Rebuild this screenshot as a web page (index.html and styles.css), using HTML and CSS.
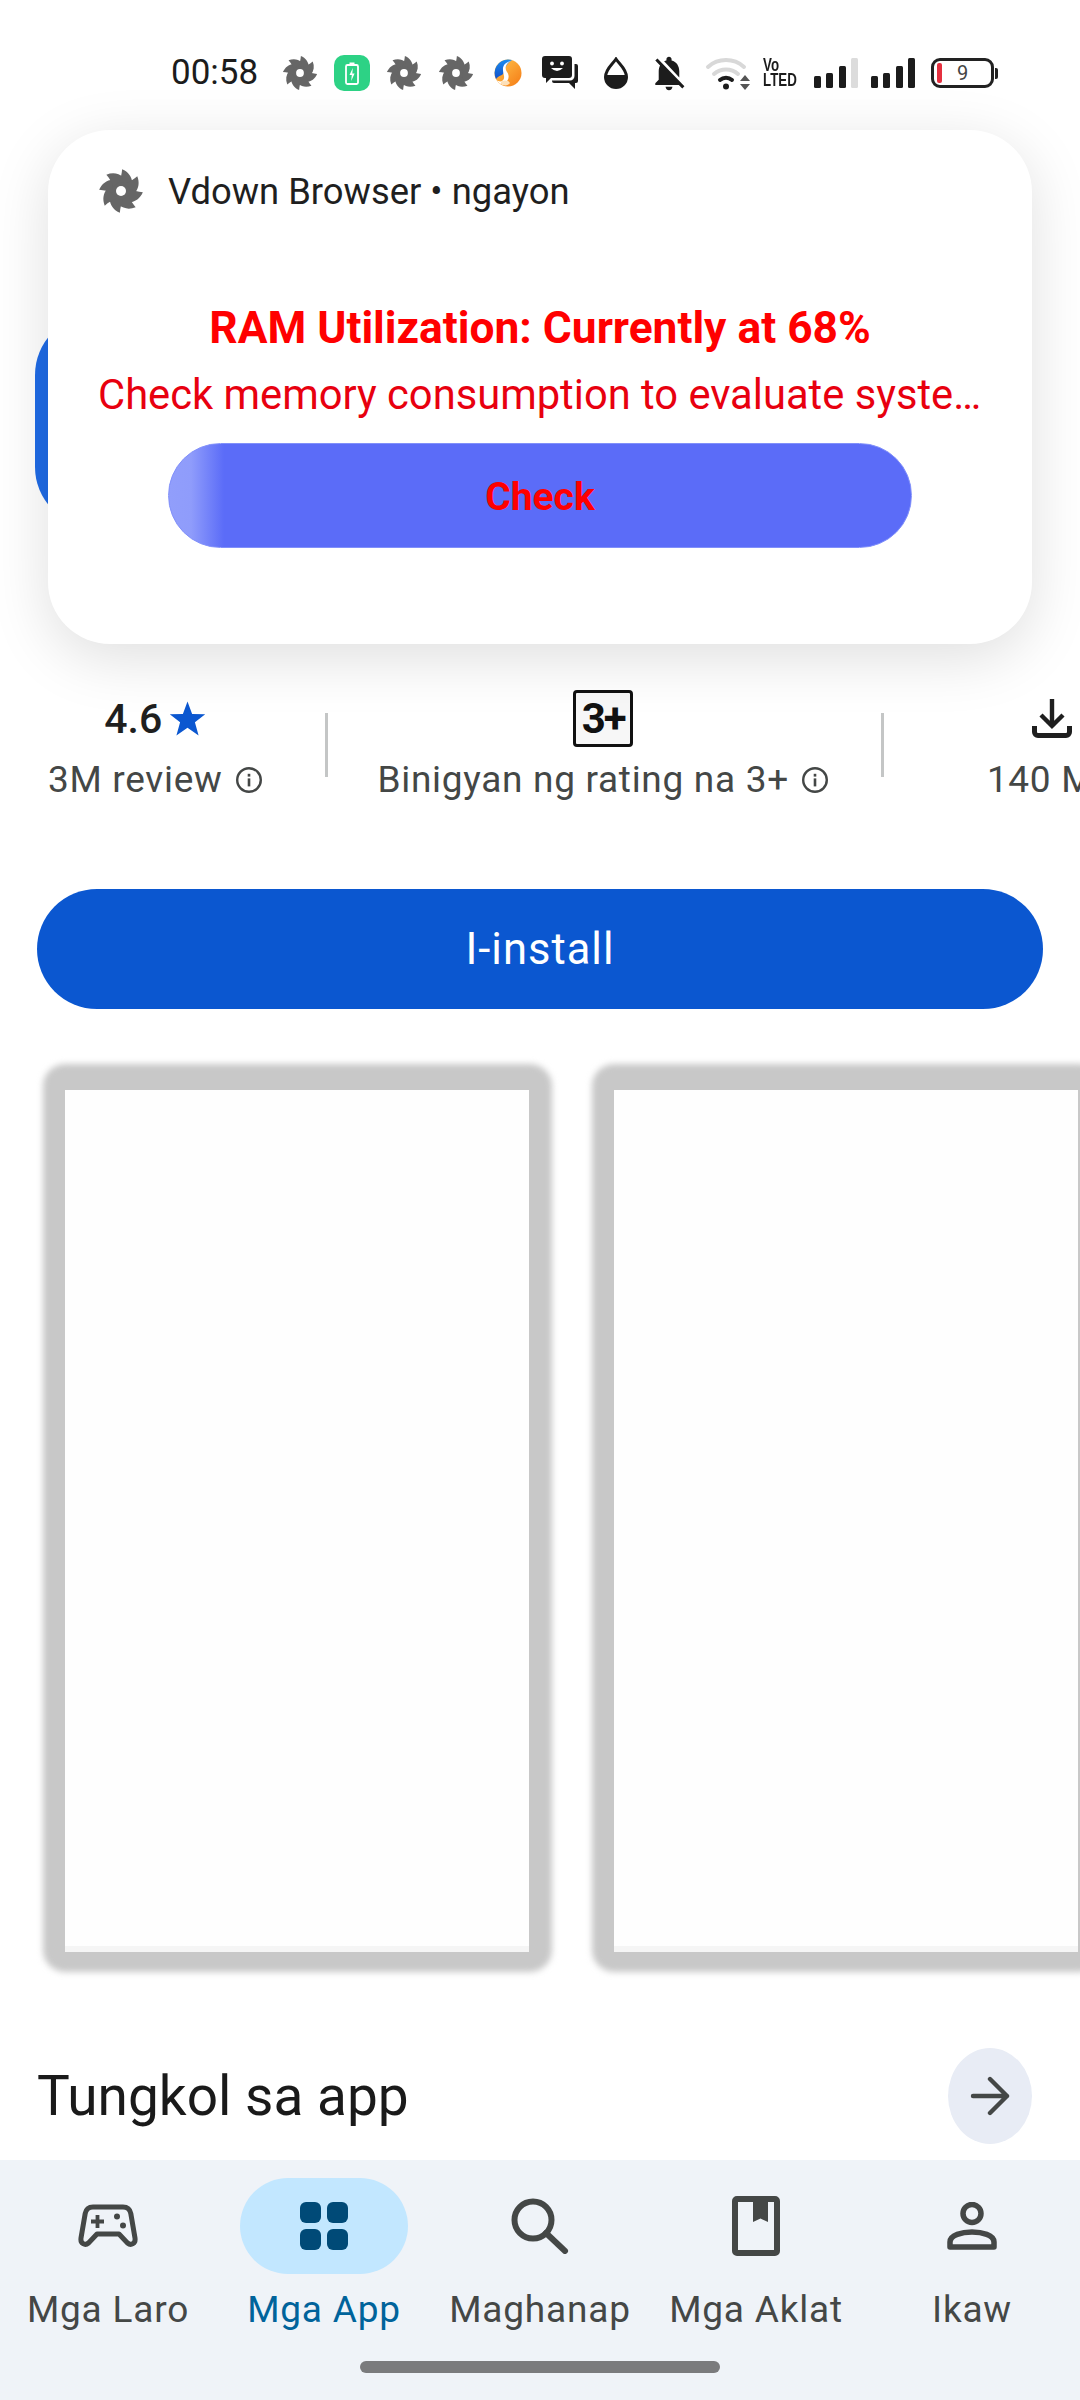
FILE: index.html
```html
<!DOCTYPE html>
<html lang="tl">
<head>
<meta charset="utf-8">
<title>Vdown Browser</title>
<link rel="stylesheet" href="styles.css">
</head>
<body>
<svg class="defs" width="0" height="0" aria-hidden="true">
  <defs>
    <g id="blade"><path d="M12.6 .6 C15.8 2 17.6 4.4 18 7.8 L11 7.6 C11.8 5.4 12.4 3.200 12.6 .6 Z"/></g>
    <symbol id="saw" viewBox="0 0 24 24">
      <circle cx="12" cy="12" r="7.8"/>
      <use href="#blade"/>
      <use href="#blade" transform="rotate(45 12 12)"/>
      <use href="#blade" transform="rotate(90 12 12)"/>
      <use href="#blade" transform="rotate(135 12 12)"/>
      <use href="#blade" transform="rotate(180 12 12)"/>
      <use href="#blade" transform="rotate(225 12 12)"/>
      <use href="#blade" transform="rotate(270 12 12)"/>
      <use href="#blade" transform="rotate(315 12 12)"/>
      <circle cx="12" cy="12" r="2.6" fill="#fff"/>
    </symbol>
    <symbol id="info" viewBox="0 0 28 28">
      <circle cx="14" cy="14" r="11.8" fill="none" stroke="currentColor" stroke-width="2.4"/>
      <rect x="12.7" y="12.4" width="2.6" height="8" fill="currentColor"/>
      <rect x="12.7" y="7.8" width="2.6" height="2.8" fill="currentColor"/>
    </symbol>
    <linearGradient id="orbR" x1="0" y1="0" x2="1" y2="1"><stop offset="0" stop-color="#ffc850"/><stop offset="1" stop-color="#f57a14"/></linearGradient>
    <linearGradient id="orbL" x1="0" y1="0" x2="0" y2="1"><stop offset="0" stop-color="#1a8cf0"/><stop offset="1" stop-color="#1450c8"/></linearGradient>
  </defs>
</svg>

<div class="page">
  <header class="status">
    <span class="time">00:58</span>
    <svg class="si saw s1"><use href="#saw"/></svg>
    <svg class="si batt-app" viewBox="0 0 36 36">
      <rect width="36" height="36" rx="10" fill="#2dd285"/>
      <rect x="12" y="10" width="12" height="19" rx="1.5" fill="none" stroke="#fff" stroke-width="1.8"/>
      <rect x="15.5" y="7.5" width="5" height="2.5" fill="#fff"/>
      <path d="M18.8 13 L15.5 20 H17.8 L17.2 26 L20.6 18.6 H18.3 Z" fill="#fff"/>
    </svg>
    <svg class="si saw s2"><use href="#saw"/></svg>
    <svg class="si saw s3"><use href="#saw"/></svg>
    <svg class="si orb" viewBox="0 0 28 28">
      <circle cx="14" cy="14" r="13.5" fill="url(#orbR)"/>
      <path d="M14 .5 A13.5 13.5 0 0 0 2 20 C5 16 9 17 10 13 C11 9 12 5 18 1 Z" fill="url(#orbL)"/>
      <path d="M18 1.2 C12 4 10 9 13 13 C16 17 15 22 9 26 C6 25 4 23 2.6 21 C6 24 11 22 10 17 C9 12 7 6 14 3 Z" fill="#fff"/>
      <path d="M7 23 C10 21 14 21 16 24 C14 27 10 27 7 25 Z" fill="#fde0b8"/>
    </svg>
    <svg class="si chat" viewBox="0 0 36 34">
      <path d="M3 0 H27 A3 3 0 0 1 30 3 V19 A3 3 0 0 1 27 22 H9 L4 27 V22 H3 A3 3 0 0 1 0 19 V3 A3 3 0 0 1 3 0 Z" fill="#1c1c1c"/>
      <path d="M32.5 8 H34 A2 2 0 0 1 36 10 V25 A2 2 0 0 1 34 27 H33 V33 L27 27 H12 A2 2 0 0 1 10 25 V24.5 H28 A4.5 4.5 0 0 0 32.5 20 Z" fill="#1c1c1c"/>
      <circle cx="10" cy="7.5" r="1.9" fill="#fff"/><circle cx="20" cy="7.5" r="1.9" fill="#fff"/>
      <path d="M9 12 Q15 18 21 12 Z" fill="#fff"/>
    </svg>
    <svg class="si drop" viewBox="0 0 24 32">
      <path d="M12 2 C16 8 22.5 12 22.5 20 A10.5 10.5 0 0 1 1.5 20 C1.5 12 8 8 12 2 Z" fill="#fff" stroke="#1c1c1c" stroke-width="3"/>
      <path d="M1.5 18 H22.5 V20 A10.5 10.5 0 0 1 1.5 20 Z" fill="#1c1c1c"/>
    </svg>
    <svg class="si bell" viewBox="2.5 1.5 19 21"><path fill="#1c1c1c" d="M20 18.69L7.84 6.14 5.27 3.49 4 4.76l2.8 2.8v.01c-.52.99-.8 2.16-.8 3.42v5l-2 2v1h13.73l2 2L21 19.72l-1-1.03zM12 22c1.11 0 2-.89 2-2h-4c0 1.11.89 2 2 2zm6-7.32V11c0-3.08-1.64-5.64-4.5-6.32V4c0-.83-.67-1.5-1.5-1.5s-1.5.67-1.5 1.5v.68c-.15.03-.29.08-.42.12-.1.03-.2.07-.3.11h-.01c-.2.08-.4.17-.59.27-.01 0-.01 0-.02.01L18 14.68z"/></svg>
    <svg class="si wifi" viewBox="0 0 46 34">
      <g fill="none" stroke-width="4" stroke-linecap="round">
        <path d="M3 11 A27 27 0 0 1 39 11" stroke="#d8d8d8"/>
        <path d="M9 18 A18 18 0 0 1 33 18" stroke="#d8d8d8"/>
        <path d="M15 24 A9 9 0 0 1 27 24" stroke="#1c1c1c"/>
      </g>
      <circle cx="21" cy="30.5" r="3" fill="#1c1c1c"/>
      <path d="M35 25 L40 19 L45 25 Z M35 28 H45 L40 34 Z" fill="#555"/>
    </svg>
    <span class="volte">Vo<br>LTED</span>
    <svg class="si signal s-a" viewBox="0 0 44 30">
      <rect x="0" y="18" width="7" height="12" rx="1.5" fill="#1c1c1c"/>
      <rect x="12" y="15" width="7" height="15" rx="1.5" fill="#1c1c1c"/>
      <rect x="25" y="8" width="7" height="22" rx="1.5" fill="#1c1c1c"/>
      <rect x="37" y="0" width="7" height="30" rx="1.5" fill="#dcdcdc"/>
    </svg>
    <svg class="si signal s-b" viewBox="0 0 44 30">
      <rect x="0" y="18" width="7" height="12" rx="1.5" fill="#1c1c1c"/>
      <rect x="12" y="15" width="7" height="15" rx="1.5" fill="#1c1c1c"/>
      <rect x="25" y="8" width="7" height="22" rx="1.5" fill="#1c1c1c"/>
      <rect x="37" y="0" width="7" height="30" rx="1.5" fill="#1c1c1c"/>
    </svg>
    <span class="battery"><span class="battery-low"></span><span class="battery-num">9</span></span>
    <span class="battery-tip"></span>
  </header>

  <section class="hero"><div class="app-icon"></div></section>

  <section class="stats">
    <div class="stat stat-rating">
      <div class="stat-top"><span class="rating">4.6</span>
        <svg class="star" viewBox="0 0 24 24"><path fill="#0b57d0" d="M12 1 L15 9 L23.5 9.2 L16.8 14.5 L19.2 23 L12 18 L4.8 23 L7.2 14.5 L.5 9.2 L9 9 Z"/></svg>
      </div>
      <div class="stat-label">3M review <svg class="info"><use href="#info"/></svg></div>
    </div>
    <div class="divider"></div>
    <div class="stat stat-age">
      <div class="stat-top"><span class="age">3+</span></div>
      <div class="stat-label">Binigyan ng rating na 3+ <svg class="info"><use href="#info"/></svg></div>
    </div>
    <div class="divider"></div>
    <div class="stat stat-size">
      <div class="stat-top"><svg class="download" viewBox="0 0 40 40"><path fill="none" stroke="#1f1f1f" stroke-width="4.4" d="M20 0 V26 M9 16 L20 27 L31 16"/><path fill="none" stroke="#1f1f1f" stroke-width="5" d="M2.500 27 V33 A3.500 3.500 0 0 0 6 36.500 H34 A3.500 3.500 0 0 0 37.500 33 V27"/></svg></div>
      <div class="stat-label">140 MB</div>
    </div>
  </section>

  <button class="install">I-install</button>

  <section class="shots">
    <div class="shot"><div class="shot-inner"></div></div>
    <div class="shot"><div class="shot-inner"></div></div>
  </section>

  <section class="about">
    <h2>Tungkol sa app</h2>
    <span class="about-arrow"><svg viewBox="0 0 40 40"><path fill="none" stroke="#444746" stroke-width="4.4" stroke-linecap="round" stroke-linejoin="round" d="M3 20 H37 M20 3 L37 20 L20 37"/></svg></span>
  </section>

  <nav class="nav">
    <div class="tabs">
      <div class="tab">
        <span class="tab-icon"><svg class="ic-game" viewBox="0 0 60 44"><path fill="none" stroke="#444746" stroke-width="5" stroke-linejoin="round" d="M15 3 H45 C49.500 3 52 5.500 52.800 9.500 L57 34 C57.800 39.500 53 42 49.500 39 L41 30 H19 L10.500 39 C7 42 2.200 39.500 3 34 L7.200 9.500 C8 5.500 10.500 3 15 3 Z"/><path fill="none" stroke="#444746" stroke-width="3.800" d="M19.500 11 V24 M13 17.500 H26"/><circle cx="39" cy="12.500" r="3" fill="#444746"/><circle cx="45" cy="21.500" r="3" fill="#444746"/></svg></span>
        <span class="tab-label">Mga Laro</span>
      </div>
      <div class="tab active">
        <span class="tab-icon"><svg class="ic-grid" viewBox="0 0 48 48"><rect width="21" height="21" rx="6"/><rect x="27" width="21" height="21" rx="6"/><rect y="27" width="21" height="21" rx="6"/><rect x="27" y="27" width="21" height="21" rx="6"/></svg></span>
        <span class="tab-label">Mga App</span>
      </div>
      <div class="tab">
        <span class="tab-icon"><svg class="ic-search" viewBox="0 0 58 56"><circle cx="22" cy="22" r="18.500" fill="none" stroke="#444746" stroke-width="6"/><path d="M35 35 L54 53" stroke="#444746" stroke-width="6" stroke-linecap="round"/></svg></span>
        <span class="tab-label">Maghanap</span>
      </div>
      <div class="tab">
        <span class="tab-icon"><svg class="ic-book" viewBox="0 0 48 60"><rect x="3" y="3" width="42" height="54" rx="2" fill="none" stroke="#444746" stroke-width="6"/><path fill="#444746" d="M21 3 H36 V26 L28.500 22.500 L21 26 Z"/></svg></span>
        <span class="tab-label">Mga Aklat</span>
      </div>
      <div class="tab">
        <span class="tab-icon"><svg class="ic-person" viewBox="0 0 50 48"><circle cx="25" cy="11.500" r="9" fill="none" stroke="#444746" stroke-width="5.500"/><path fill="none" stroke="#444746" stroke-width="5.500" stroke-linejoin="round" d="M3 45 V40 C3 33 15 30 25 30 C35 30 47 33 47 40 V45 Z"/></svg></span>
        <span class="tab-label">Ikaw</span>
      </div>
    </div>
    <div class="home-bar"></div>
  </nav>

  <aside class="notice">
    <div class="notice-head">
      <svg class="notice-icon"><use href="#saw"/></svg>
      <span>Vdown Browser • ngayon</span>
    </div>
    <p class="notice-title">RAM Utilization: Currently at 68%</p>
    <p class="notice-text">Check memory consumption to evaluate system performance now</p>
    <div class="notice-btn">Check</div>
  </aside>
</div>
</body>
</html>
```

FILE: styles.css
```css
* { box-sizing: border-box; }
html, body { margin: 0; padding: 0; background: #fff; }
.defs { position: absolute; }
.page {
  position: relative;
  width: 1080px;
  height: 2400px;
  overflow: hidden;
  display: flex;
  flex-direction: column;
  background: #fff;
  font-family: Roboto, "Noto Sans", sans-serif;
  color: #1f1f1f;
}

/* status bar */
.status {
  display: flex;
  align-items: center;
  height: 36px;
  margin-top: 55px;
  padding-left: 171px;
  flex: none;
}
.time { font-size: 35px; line-height: 38px; width: 87px; color: #1c1c1c; }
.si { display: block; flex: none; }
.saw { width: 36px; height: 36px; fill: #666; }
.s1 { margin-left: 24px; }
.batt-app { width: 36px; height: 36px; margin-left: 16px; }
.s2 { margin-left: 16px; }
.s3 { margin-left: 16px; }
.orb { width: 28px; height: 28px; margin-left: 20px; }
.chat { width: 36px; height: 34px; margin-left: 20px; }
.drop { width: 24px; height: 32px; margin-left: 26px; }
.bell { width: 34px; height: 36px; margin-left: 24px; }
.wifi { width: 46px; height: 34px; margin-left: 19px; }
.volte {
  display: block;
  flex: none;
  width: 36px;
  margin-left: 12px;
  font-family: "Liberation Sans", sans-serif;
  font-weight: 700;
  font-size: 18px;
  line-height: 15px;
  white-space: nowrap;
  color: #1c1c1c;
  transform: scaleX(.74);
  transform-origin: left;
}
.signal { width: 44px; height: 30px; }
.s-a { margin-left: 15px; }
.s-b { margin-left: 13px; }
.battery {
  position: relative;
  display: flex;
  align-items: center;
  justify-content: center;
  flex: none;
  width: 63px;
  height: 30px;
  margin-left: 16px;
  border: 3px solid #222;
  border-radius: 9px;
}
.battery-low {
  position: absolute;
  left: 3px;
  top: 2px;
  width: 5px;
  height: 20px;
  border-radius: 2px;
  background: #e5303f;
}
.battery-num { font-size: 20px; color: #444; }
.battery-tip {
  flex: none;
  width: 3px;
  height: 11px;
  margin-left: 1px;
  border-radius: 0 2px 2px 0;
  background: #222;
}

/* behind the notification */
.hero {
  flex: none;
  height: 599px;
  padding: 224px 0 0 35px;
}
.app-icon {
  width: 220px;
  height: 212px;
  border-radius: 60px;
  background: #1f6be6;
}

/* stats */
.stats {
  display: flex;
  align-items: flex-start;
  flex: none;
  height: 199px;
  padding-left: 48px;
  white-space: nowrap;
}
.stat { display: flex; flex-direction: column; align-items: center; flex: none; }
.stat-top { display: flex; align-items: center; justify-content: center; height: 57px; }
.stat-label {
  display: flex;
  align-items: center;
  gap: 12px;
  margin-top: 11px;
  font-size: 37px;
  line-height: 44px;
  letter-spacing: .7px;
  color: #444746;
}
.rating { font-size: 41px; font-weight: 500; color: #1f1f1f; }
.star { width: 37px; height: 37px; margin-left: 7px; }
.info { width: 28px; height: 28px; color: #444746; }
.age {
  display: flex;
  align-items: center;
  justify-content: center;
  width: 60px;
  height: 57px;
  border: 3px solid #111;
  border-radius: 4px;
  background: #f7f7f7;
  font-size: 42px;
  font-weight: 700;
  letter-spacing: -2px;
  color: #111;
}
.divider {
  flex: none;
  width: 3px;
  height: 64px;
  margin: 23px 50px 0 62px;
  background: #c4c6c6;
}
.stat-age + .divider { margin: 23px 52px 0; }
.stat-size { margin-left: 51px; }
.download { width: 40px; height: 40px; }

/* install */
.install {
  display: block;
  flex: none;
  width: 1006px;
  height: 120px;
  margin: 0 0 0 37px;
  padding: 0;
  border: 0;
  border-radius: 60px;
  background: #0b57d0;
  color: #fff;
  font-family: inherit;
  font-size: 43.5px;
  font-weight: 450;
  letter-spacing: 1px;
}

/* screenshots */
.shots {
  display: flex;
  gap: 43px;
  flex: none;
  margin-top: 55px;
  padding-left: 44px;
}
.shot {
  position: relative;
  flex: none;
  width: 506px;
  height: 906px;
  padding: 26px 21px 18px;
}
.shot::before {
  content: "";
  position: absolute;
  inset: 0 -2px -2px -1px;
  border-radius: 22px;
  background: #c8c8c8;
  filter: blur(3px);
}
.shot-inner {
  position: relative;
  height: 100%;
  background: linear-gradient(#fefefe calc(100% - 6px), #f5f5f5 calc(100% - 6px));
}

/* about */
.about {
  display: flex;
  align-items: center;
  justify-content: space-between;
  flex: none;
  height: 96px;
  margin-top: 78px;
  padding: 0 48px 0 37px;
}
.about h2 {
  margin: 0;
  font-size: 55px;
  font-weight: 400;
  line-height: 60px;
  color: #1a1a1a;
}
.about-arrow {
  display: flex;
  align-items: center;
  justify-content: center;
  width: 84px;
  height: 96px;
  border-radius: 50%;
  background: #e8ecf5;
}
.about-arrow svg { width: 40px; height: 40px; }

/* bottom navigation */
.nav {
  flex: none;
  height: 240px;
  margin-top: auto;
  background: #eff3f8;
}
.tabs { display: flex; padding-top: 18px; }
.tab {
  flex: 1;
  display: flex;
  flex-direction: column;
  align-items: center;
}
.tab-icon {
  display: flex;
  align-items: center;
  justify-content: center;
  width: 168px;
  height: 96px;
  border-radius: 48px;
}
.active .tab-icon { background: #c2e7ff; }
.tab-label {
  margin-top: 15px;
  font-size: 37px;
  line-height: 42px;
  letter-spacing: .8px;
  color: #444746;
}
.active .tab-label { color: #00639b; }
.ic-game { width: 60px; height: 44px; }
.ic-grid { width: 48px; height: 48px; fill: #004a77; }
.ic-search { width: 58px; height: 56px; }
.ic-book { width: 48px; height: 60px; }
.ic-person { width: 50px; height: 48px; }
.home-bar {
  width: 360px;
  height: 12px;
  margin: 30px auto 0;
  border-radius: 6px;
  background: #7a7b7d;
}

/* notification overlay */
.notice {
  position: absolute;
  left: 48px;
  top: 130px;
  width: 984px;
  height: 514px;
  padding: 37px 50px 0;
  border-radius: 62px;
  background: #fff;
  box-shadow: 0 14px 60px rgba(0, 0, 0, .13);
}
.notice-head {
  display: flex;
  align-items: center;
  gap: 24px;
  height: 48px;
  font-size: 36.4px;
  color: #1f1f1f;
}
.notice-icon { width: 46px; height: 46px; fill: #666; flex: none; }
.notice-title {
  margin: 89px 0 0;
  text-align: center;
  font-size: 44.3px;
  font-weight: 700;
  line-height: 48px;
  color: #f00;
}
.notice-text {
  margin: 19px 0 0;
  overflow: hidden;
  white-space: nowrap;
  text-overflow: ellipsis;
  font-size: 41.7px;
  line-height: 48px;
  color: #e8000f;
}
.notice-btn {
  display: flex;
  align-items: center;
  justify-content: center;
  width: 744px;
  height: 105px;
  margin: 24px 0 0 70px;
  padding-top: 3px;
  border: 1px solid #8190fa;
  border-radius: 53px;
  background: linear-gradient(90deg, #919efb 0, #8f9cfb 22px, #5b6cf8 55px);
  font-size: 39px;
  font-weight: 700;
  color: #f00;
}
```
